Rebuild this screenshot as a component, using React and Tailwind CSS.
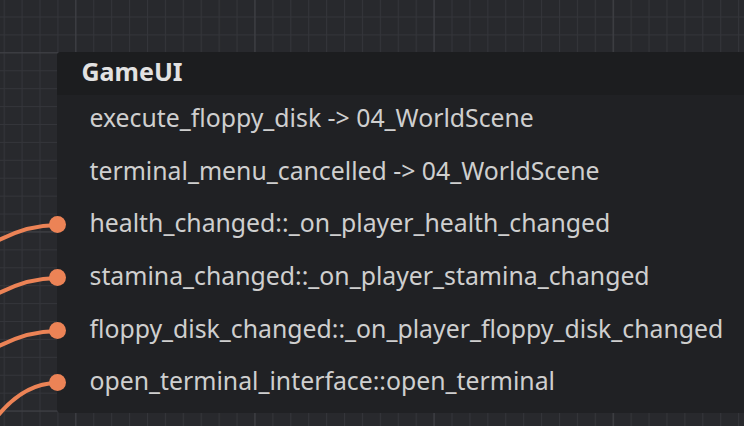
const rows = [
  { label: 'execute_floppy_disk -> 04_WorldScene', port: false },
  { label: 'terminal_menu_cancelled -> 04_WorldScene', port: false },
  { label: 'health_changed::_on_player_health_changed', port: true },
  { label: 'stamina_changed::_on_player_stamina_changed', port: true },
  { label: 'floppy_disk_changed::_on_player_floppy_disk_changed', port: true },
  { label: 'open_terminal_interface::open_terminal', port: true },
]

// wires coming in from nodes off to the left
const wires = [
  'M -30 258 Q 15 225 57 225',
  'M -30 311 Q 15 278 57 278',
  'M -30 364 Q 15 331 57 331',
  'M -10 426 Q 20 383 57 383',
]

function Grid() {
  return (
    <svg className="absolute inset-0" width="744" height="426">
      <defs>
        <pattern id="minor" width="17.913" height="17.913" patternUnits="userSpaceOnUse" x="3.66" y="16.5">
          <path d="M 0.5 0 V 17.913 M 0 0.5 H 17.913" stroke="#34353a" strokeWidth="1" fill="none" />
        </pattern>
        <pattern id="major" width="179.13" height="179.13" patternUnits="userSpaceOnUse" x="75.3" y="52.3">
          <path d="M 0.5 0 V 179.13 M 0 0.5 H 179.13" stroke="#404146" strokeWidth="1" fill="none" />
        </pattern>
      </defs>
      <rect width="744" height="426" fill="url(#minor)" />
      <rect width="744" height="426" fill="url(#major)" />
      {wires.map((d, i) => (
        <path key={i} d={d} stroke="#ec8356" strokeWidth="4" fill="none" strokeLinecap="round" />
      ))}
    </svg>
  )
}

export default function App() {
  return (
    <div
      className="relative w-[744px] h-[426px] overflow-hidden bg-[#28292d]"
      style={{ fontFamily: '"Noto Sans", "Open Sans", sans-serif' }}
    >
      <Grid />
      <div className="absolute left-[57px] top-[52px] w-[720px] rounded-l-[4px] bg-[#202124] pb-[2px]">
        <div className="h-[43px] flex items-center pl-[24.5px] pb-[4px] bg-[#1c1d1f] rounded-tl-[4px]">
          <span className="text-[25px] font-bold text-[#e2e2e2] leading-none">GameUI</span>
        </div>
        {rows.map((r) => (
          <div key={r.label} className="relative h-[52.7px] flex items-center pl-[32.5px] pb-[8px]">
            {r.port && (
              <span className="absolute left-[-8.5px] top-[16px] w-[17px] h-[17px] rounded-full bg-[#ec8356]" />
            )}
            <span className="text-[24.8px] text-[#cfcfcf] leading-none whitespace-nowrap">{r.label}</span>
          </div>
        ))}
      </div>
    </div>
  )
}
